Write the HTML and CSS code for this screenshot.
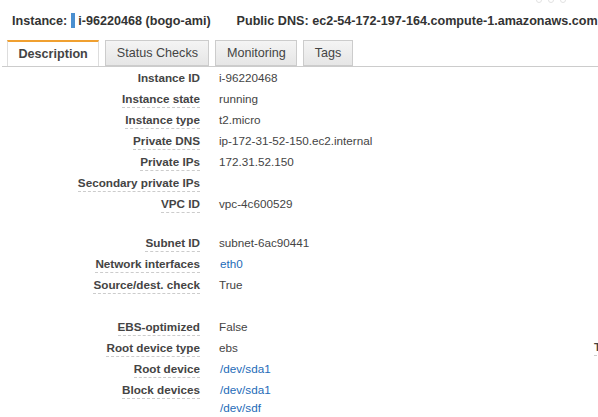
FILE: index.html
```html
<!DOCTYPE html>
<html>
<head>
<meta charset="utf-8">
<link rel="stylesheet" href="styles.css">
</head>
<body>
<div class="page">
  <div class="handle"><span></span><span></span><span></span></div>
  <header class="head">
    <span class="head-item"><b>Instance:</b><i class="marker"></i><b>i-96220468 (bogo-ami)</b></span>
    <span class="head-item"><b>Public DNS: ec2-54-172-197-164.compute-1.amazonaws.com</b></span>
  </header>
  <nav class="tabs">
    <div class="tab active">Description</div>
    <div class="tab">Status Checks</div>
    <div class="tab">Monitoring</div>
    <div class="tab">Tags</div>
  </nav>
  <div class="details">
    <div class="col col-left">
      <div class="row"><div class="label"><span class="plain">Instance ID</span></div><div class="value">i-96220468</div></div>
      <div class="row"><div class="label"><span>Instance state</span></div><div class="value">running</div></div>
      <div class="row"><div class="label"><span>Instance type</span></div><div class="value">t2.micro</div></div>
      <div class="row"><div class="label"><span>Private DNS</span></div><div class="value">ip-172-31-52-150.ec2.internal</div></div>
      <div class="row"><div class="label"><span>Private IPs</span></div><div class="value">172.31.52.150</div></div>
      <div class="row"><div class="label"><span>Secondary private IPs</span></div><div class="value"></div></div>
      <div class="row"><div class="label"><span>VPC ID</span></div><div class="value">vpc-4c600529</div></div>
      <div class="spacer s1"></div>
      <div class="row"><div class="label"><span>Subnet ID</span></div><div class="value">subnet-6ac90441</div></div>
      <div class="row"><div class="label"><span>Network interfaces</span></div><div class="value"><a class="link">eth0</a></div></div>
      <div class="row"><div class="label"><span>Source/dest. check</span></div><div class="value">True</div></div>
      <div class="spacer s2"></div>
      <div class="row"><div class="label"><span>EBS-optimized</span></div><div class="value">False</div></div>
      <div class="row"><div class="label"><span>Root device type</span></div><div class="value">ebs</div></div>
      <div class="row"><div class="label"><span>Root device</span></div><div class="value"><a class="link">/dev/sda1</a></div></div>
      <div class="row"><div class="label"><span>Block devices</span></div><div class="value multi"><a class="link">/dev/sda1</a><a class="link">/dev/sdf</a></div></div>
    </div>
    <div class="col col-right">
      <div class="row-r"><span class="label-r">Termination protection</span></div>
    </div>
  </div>
</div>
</body>
</html>
```

FILE: styles.css
```css
html, body {
  margin: 0;
  padding: 0;
  background: #fff;
}
body {
  width: 598px;
  height: 417px;
  overflow: hidden;
  font-family: "Liberation Sans", Arial, sans-serif;
  font-size: 11.7px;
  color: #444;
}
.page {
  position: relative;
  width: 598px;
}
.handle {
  position: absolute;
  top: -3px;
  left: 536px;
  display: flex;
  gap: 6px;
}
.handle span {
  width: 4px;
  height: 4px;
  border: 1px solid #e2e2e2;
  border-radius: 50%;
}
.head {
  display: flex;
  gap: 26px;
  padding: 7px 0 0 12px;
  height: 34px;
  box-sizing: border-box;
  font-size: 12.6px;
  line-height: 16px;
  color: #333;
  white-space: nowrap;
}
.head-item {
  display: flex;
  align-items: center;
}
.head b {
  font-weight: bold;
}
.marker {
  display: inline-block;
  width: 4px;
  height: 15px;
  background: #4a8fd0;
  margin: 0 3px 0 4px;
}
.tabs {
  display: flex;
  gap: 6px;
  margin-top: 6px;
  margin-left: 2px;
  padding-left: 5px;
  border-bottom: 1px solid #ccc;
  font-size: 12.6px;
}
.tab {
  height: 26px;
  box-sizing: border-box;
  padding: 0 10.5px;
  border: 1px solid #ccc;
  background: linear-gradient(#f4f4f4, #e6e6e6);
  display: flex;
  align-items: center;
  color: #444;
}
.tab.active {
  background: #fff;
  border-color: #ddd;
  border-top: 2px solid #f0a030;
  border-bottom: none;
  font-weight: bold;
}
.details {
  display: flex;
}
.col-left {
  flex: 0 0 594px;
}
.row {
  display: grid;
  grid-template-columns: 200px 1fr;
  column-gap: 19px;
  line-height: 21px;
}
.label {
  text-align: right;
  font-weight: bold;
  white-space: nowrap;
}
.label span {
  display: inline-block;
  line-height: 17px;
  border-bottom: 1px dashed #ccc;
}
.label span.plain {
  border-bottom-color: transparent;
}
.value {
  white-space: nowrap;
}
.value.multi {
  line-height: 18px;
  padding-top: 1.5px;
  display: flex;
  flex-direction: column;
}
.link {
  color: #1e6bb8;
  padding-left: 1px;
}
.spacer.s1 {
  height: 18px;
}
.spacer.s2 {
  height: 21px;
}
.col-right {
  padding-top: 269px;
}
.row-r {
  line-height: 21px;
  white-space: nowrap;
}
.label-r {
  display: inline-block;
  line-height: 17px;
  font-weight: bold;
  color: #444;
  border-bottom: 1px dashed #ccc;
}
```
